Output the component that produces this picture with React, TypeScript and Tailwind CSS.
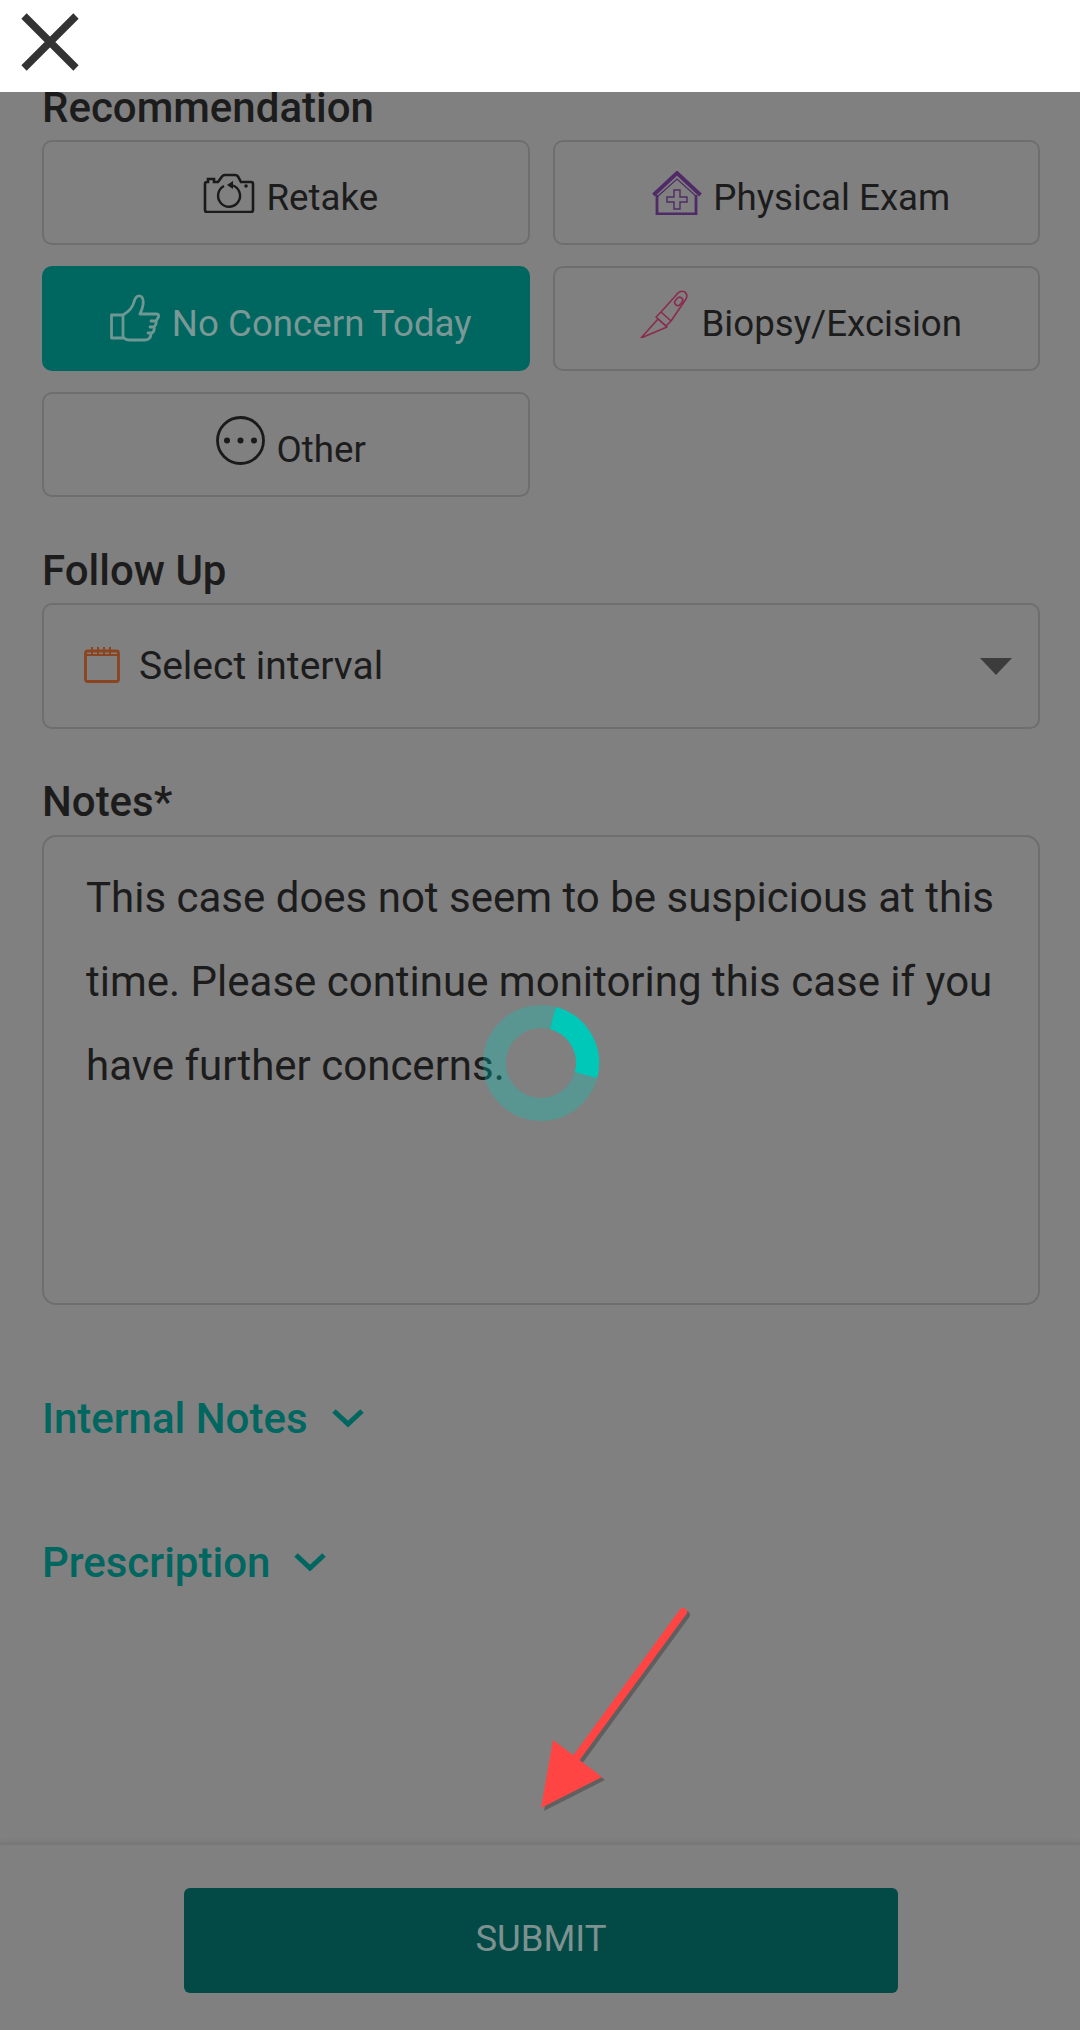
const roboto = "font-['Roboto',sans-serif]";

function CloseIcon() {
  return (
    <svg width="60" height="60" viewBox="0 0 60 60" className="ml-[20px] mb-[8px]">
      <path d="M4 4 L56 56 M56 4 L4 56" stroke="#333333" strokeWidth="7.5" fill="none" />
    </svg>
  );
}

function CameraIcon() {
  return (
    <svg width="52" height="40" viewBox="0 0 52 40" fill="none" stroke="#1a1a1a" strokeWidth="2.6">
      <path d="M2 37 V11 Q2 9 4 9 H5 V6 H11 V9 H15 L19 3.5 Q20 2 22 2 H32 Q34 2 35 3.5 L38 9 H48 Q50 9 50 11 V37 Q50 39 48 39 H4 Q2 39 2 37 Z" />
      <path d="M21 13 A11 11 0 1 0 30 12.5" strokeWidth="2.4" />
      <path d="M30 8 L24 12 L30 16 Z" fill="#1a1a1a" stroke="none" />
      <circle cx="43" cy="13" r="1.8" fill="#1a1a1a" stroke="none" />
    </svg>
  );
}

function HouseIcon() {
  return (
    <svg width="50" height="44" viewBox="0 0 50 44" fill="none" stroke="#4f2a66">
      <path d="M1.5 24 L25 2 L48.5 24" strokeWidth="3.8" />
      <path d="M5 26 L25 8 L45 26" strokeWidth="1.2" />
      <path d="M5 24 V43 H44 V24" strokeWidth="2.8" />
      <path d="M22 19 H28 V26 H35 V31 H28 V38 H22 V31 H15 V26 H22 Z" strokeWidth="1.4" />
    </svg>
  );
}

function ThumbIcon() {
  return (
    <svg width="50" height="48" viewBox="0 0 50 48" fill="none" stroke="#6f9794" strokeWidth="2.8" strokeLinejoin="round">
      <path d="M1.5 21 H13 V44 H1.5 Z" />
      <path d="M13 21 Q22 16 24 8 Q26 1 30 2 Q34 3 33 11 Q32 16 30 20 H47 Q49 20 48.5 23 L46 27 H41 H46 Q47 30 44 33 H40 H44 Q45 37 42 39 H38 H41 Q41 46 35 46 H20 Q15 46 13 43" />
    </svg>
  );
}

function ScalpelIcon() {
  return (
    <svg width="48" height="48" viewBox="0 0 48 48" fill="none" stroke="#8a2b4e" strokeWidth="1.6" strokeLinejoin="round">
      <path d="M1 48 L18 29 L27 37 Z" />
      <path d="M16 27 L21 22 L31 31 L26 36 Z" />
      <path d="M21 22 L38 3 Q41 0 45 2 Q48 5 46 9 L31 31" />
      <rect x="36" y="7" width="6" height="9" rx="3" transform="rotate(40 39 11)" />
    </svg>
  );
}

function OtherIcon() {
  return (
    <svg width="49" height="49" viewBox="0 0 49 49" fill="none">
      <circle cx="24.5" cy="24.5" r="23" stroke="#1a1a1a" strokeWidth="2.8" />
      <circle cx="11" cy="24.5" r="3" fill="#1a1a1a" />
      <circle cx="24.5" cy="24.5" r="3" fill="#1a1a1a" />
      <circle cx="38" cy="24.5" r="3" fill="#1a1a1a" />
    </svg>
  );
}

function CalendarIcon() {
  return (
    <svg width="36" height="37" viewBox="0 0 36 37" fill="none" stroke="#8a4420" strokeWidth="2.8" className="mb-[3px]">
      <rect x="1.5" y="5" width="33" height="30.5" rx="2" />
      <path d="M2 9 H34" strokeWidth="2" />
      <path d="M8 1 V8 M14 1 V8 M20 1 V8 M26 1 V8" strokeWidth="2" />
    </svg>
  );
}

function Chevron() {
  return (
    <svg width="32" height="20" viewBox="0 0 32 20" fill="none" className="ml-[24px] mb-[2px]">
      <path d="M2 3 L16 16 L30 3" stroke="#006660" strokeWidth="5" />
    </svg>
  );
}

function Choice({
  icon,
  label,
  gap,
  iconClass,
  selected,
}: {
  icon: React.ReactNode;
  label: string;
  gap: string;
  iconClass?: string;
  selected?: boolean;
}) {
  return (
    <div
      className={`h-[105px] rounded-[10px] border-2 flex items-center justify-center pl-[10px] text-[36.7px] leading-[42px] ${
        selected ? "bg-[#006660] border-[#006660] text-[#7a9896]" : "border-[#6e6e6e] text-[#1c1c1c]"
      }`}
    >
      <div className={`flex items-center ${gap}`}>
        <div className={iconClass}>{icon}</div>
        <span className="mt-[11px]">{label}</span>
      </div>
    </div>
  );
}

export default function App() {
  return (
    <div className={`relative h-[2030px] bg-[#808080] overflow-hidden flex flex-col ${roboto}`}>
      {/* top bar */}
      <header className="relative z-10 h-[92px] shrink-0 bg-white flex items-center">
        <CloseIcon />
      </header>

      <main className="flex-1 px-[42px] -mt-[5px] text-[#1c1c1c]">
        <h2 className="text-[42px] leading-[42px] font-medium mb-[11px]">Recommendation</h2>
        <div className="w-[998px] grid grid-cols-2 gap-x-[23px] gap-y-[21px]">
          <Choice icon={<CameraIcon />} label="Retake" gap="gap-[11px]" />
          <Choice icon={<HouseIcon />} label="Physical Exam" gap="gap-[11px]" />
          <Choice icon={<ThumbIcon />} label="No Concern Today" gap="gap-[12px]" iconClass="mb-[2px]" selected />
          <Choice icon={<ScalpelIcon />} label="Biopsy/Excision" gap="gap-[13px]" iconClass="mb-[10px]" />
          <Choice icon={<OtherIcon />} label="Other" gap="gap-[12px]" iconClass="mb-[9px]" />
        </div>

        <h2 className="text-[42px] leading-[42px] font-medium mt-[53px] mb-[11px]">Follow Up</h2>
        <div className="w-[998px] h-[126px] rounded-[10px] border-2 border-[#6e6e6e] flex items-center pl-[40px] pr-[26px]">
          <CalendarIcon />
          <span className="ml-[19px] text-[39px] leading-[42px]">Select interval</span>
          <div className="ml-auto w-0 h-0 border-x-[16px] border-x-transparent border-t-[17px] border-t-[#3c3c3c]" />
        </div>

        <h2 className="text-[42px] leading-[42px] font-medium mt-[52px] mb-[12px]">Notes*</h2>
        <div className="w-[998px] h-[470px] rounded-[14px] border-2 border-[#6e6e6e] pl-[42px] pr-[30px] pt-[19px] text-[42px] leading-[84px]">
          This case does not seem to be suspicious at this time. Please continue monitoring this case if you have further concerns.
        </div>

        <div className="mt-[90px] flex items-center text-[42px] leading-[47px] font-medium text-[#006660]">
          Internal Notes
          <Chevron />
        </div>
        <div className="mt-[97px] flex items-center text-[42px] leading-[47px] font-medium text-[#006660]">
          Prescription
          <Chevron />
        </div>
      </main>

      {/* submit bar */}
      <footer className="h-[187px] shrink-0 border-t-2 border-[#787878] shadow-[0_-2px_4px_rgba(0,0,0,0.06)] flex justify-center pt-[43px] pl-[2px]">
        <button className="w-[714px] h-[105px] pb-[2px] rounded-[6px] bg-[#034a46] text-[#7d9290] text-[36.5px]">
          SUBMIT
        </button>
      </footer>

      {/* loading spinner, see-through so the text shows under the ring */}
      <svg width="120" height="120" viewBox="0 0 120 120" fill="none" className="absolute left-[481px] top-[1003px]">
        <circle cx="60" cy="60" r="46.5" stroke="#00c8b8" strokeOpacity="0.3" strokeWidth="23" />
        <path d="M72 15 A46.5 46.5 0 0 1 105 72" stroke="#00c8b8" strokeWidth="23" />
      </svg>

      {/* annotation arrow */}
      <svg width="1080" height="300" viewBox="0 1560 1080 300" fill="none" className="absolute left-0 top-[1560px] pointer-events-none">
        <g transform="translate(3 3)" opacity="0.25">
          <path d="M683 1612 L577 1757" stroke="#000000" strokeWidth="8" strokeLinecap="round" />
          <path d="M541 1808 L553 1740 L602 1777 Z" fill="#000000" />
        </g>
        <path d="M683 1612 L577 1757" stroke="#ff4444" strokeWidth="8" strokeLinecap="round" />
        <path d="M541 1808 L553 1740 L602 1777 Z" fill="#ff4444" />
      </svg>
    </div>
  );
}
